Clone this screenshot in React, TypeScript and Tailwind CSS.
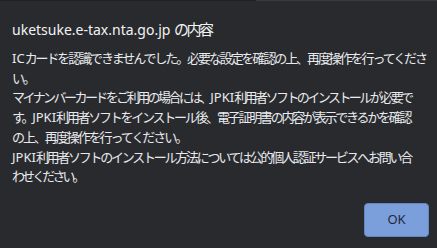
import React from 'react';

const lines = [
  { text: 'ICカードを認識できませんでした。必要な設定を確認の上、再度操作を行ってくださ', cls: 'tracking-[-2.1px]' },
  { text: 'い。', cls: 'tracking-[-2px]' },
  { text: 'マイナンバーカードをご利用の場合には、JPKI利用者ソフトのインストールが必要で', cls: 'tracking-[-2.55px]' },
  { text: 'す。JPKI利用者ソフトをインストール後、電子証明書の内容が表示できるかを確認', cls: 'tracking-[-2.25px]' },
  { text: 'の上、再度操作を行ってください。', cls: 'tracking-[-2.05px]' },
  { text: 'JPKI利用者ソフトのインストール方法については公的個人認証サービスへお問い合', cls: 'tracking-[-2.26px]' },
  { text: 'わせください。', cls: 'tracking-[-2.9px]' },
];

function runs(text: string, cls: string) {
  const parts = text.match(/[\x20-\x7e]+|[^\x20-\x7e]+/g) || [];
  return parts.map((p, i) =>
    /^[\x20-\x7e]+$/.test(p) ? (
      <span key={i}>{p}</span>
    ) : (
      <span key={i} className={cls}>
        {p}
      </span>
    )
  );
}

export default function App() {
  return (
    <div
      className="w-[437px] h-[248px] bg-[#292a2d] text-[#e8eaed] flex flex-col overflow-hidden"
      style={{ fontFamily: '"Noto Sans", "Noto Sans CJK JP", sans-serif' }}
    >
      {/* top edge */}
      <div className="flex h-px shrink-0">
        <div className="w-[256px] bg-[#1f2023]" />
        <div className="flex-1 bg-[#3a3b3f]" />
      </div>

      <div className="pl-3 pr-2 pt-[18px] flex flex-col flex-1">
        <h1 className="text-[14px] leading-[20px] text-[#f1f3f4] whitespace-nowrap">
          uketsuke.e-tax.nta.go.jp{' '}
          <span className="text-[15px] tracking-[-2.5px]">の内容</span>
        </h1>

        <div className="mt-[9px] text-[13px] leading-[19.7px] whitespace-nowrap">
          {lines.map((l, i) => (
            <div key={i}>{runs(l.text, l.cls)}</div>
          ))}
        </div>

        <div className="flex justify-end mt-auto mb-[11px]">
          <button className="w-[65px] h-[34px] rounded-[4px] bg-[#7b9fdb] border border-[#6486c4] text-[#1f2a3d] text-[13px]">
            OK
          </button>
        </div>
      </div>
    </div>
  );
}
